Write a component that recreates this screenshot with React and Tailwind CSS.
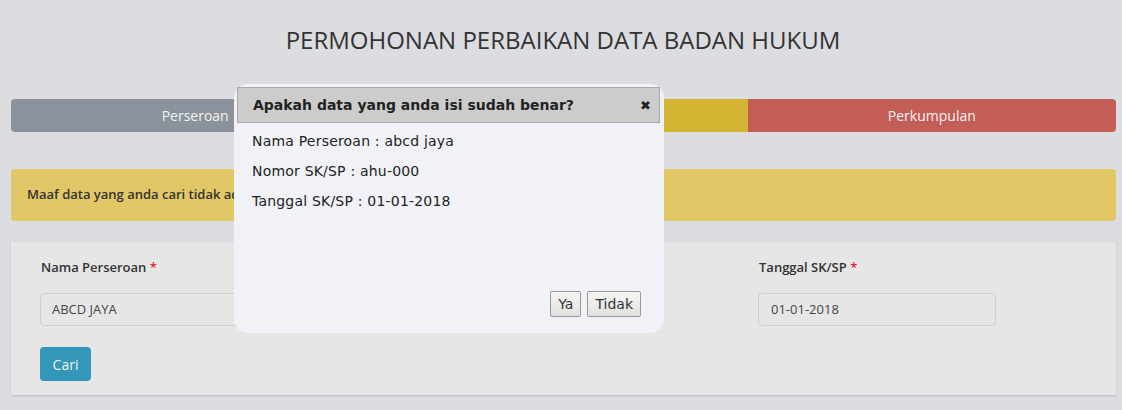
import React from "react";

export default function App() {
  return (
    <div className="relative w-[1122px] h-[410px] overflow-hidden bg-[#dcdde1] font-['Open_Sans',sans-serif] text-[#333]">
      <div className="pt-[24px] h-[99px]">
        <h1 className="text-center text-[24px] leading-[32px] font-normal text-[#333] pl-[4px]">
          PERMOHONAN PERBAIKAN DATA BADAN HUKUM
        </h1>
      </div>

      <div className="mx-[11px] w-[1105px] h-[33px] flex rounded-[4px] overflow-hidden text-[14px] text-[#f2f2f2]">
        <div className="flex-1 bg-[#8a929b] flex items-center justify-center">Perseroan</div>
        <div className="flex-1 bg-[#d4b533] flex items-center justify-center">Yayasan</div>
        <div className="flex-1 bg-[#c25e55] flex items-center justify-center">Perkumpulan</div>
      </div>

      <div className="mx-[11px] mt-[37px] w-[1105px] h-[52px] rounded-[4px] bg-[#e2c766] flex items-center px-[16px] text-[13px] font-semibold text-[#333]">
        Maaf data yang anda cari tidak ada
      </div>

      <div className="mx-[11px] mt-[21px] w-[1105px] h-[153px] bg-[#e6e6e6] shadow-[0_1px_2px_rgba(0,0,0,0.15)] pt-[16px] px-[29px]">
        <div className="grid grid-cols-[329px_329px_238px] gap-x-[30px]">
          <div>
            <div className="text-[13px] font-semibold leading-[18px] h-[35px] pl-[1px]">
              Nama Perseroan <span className="text-[#e0262b]">*</span>
            </div>
            <div className="h-[33px] border border-[#cfcfcf] rounded-[4px] flex items-center px-[11px] text-[13px] text-[#444]">
              ABCD JAYA
            </div>
          </div>
          <div>
            <div className="text-[13px] font-semibold leading-[18px] h-[35px]">
              Nomor SK/SP <span className="text-[#e0262b]">*</span>
            </div>
            <div className="w-[250px] h-[33px] border border-[#cfcfcf] rounded-[4px] flex items-center px-[11px] text-[13px] text-[#444]">
              ahu-000
            </div>
          </div>
          <div>
            <div className="text-[13px] font-semibold leading-[18px] h-[35px] pl-[1px]">
              Tanggal SK/SP <span className="text-[#e0262b]">*</span>
            </div>
            <div className="h-[33px] border border-[#cfcfcf] rounded-[4px] flex items-center px-[12px] text-[13px] text-[#444]">
              01-01-2018
            </div>
          </div>
        </div>
        <button className="mt-[21px] w-[51px] h-[34px] rounded-[4px] bg-[#3397b9] text-[#f2f2f2] text-[14px]">
          Cari
        </button>
      </div>

      <div className="absolute left-[234px] top-[84px] w-[430px] h-[249px] rounded-[14px] bg-[#f0f2f7] pt-[3px] pl-[3px] pr-[4px] pb-[16px] flex flex-col font-['DejaVu_Sans',Verdana,sans-serif]">
        <div className="h-[36px] bg-[#cccccc] border border-[#aaaaaa] flex items-center justify-between pl-[15px] pr-[8px]">
          <span className="text-[14px] font-bold text-[#222]">Apakah data yang anda isi sudah benar?</span>
          <span className="text-[13px] font-bold text-[#222] leading-none">✖</span>
        </div>
        <div className="pl-[15px] pt-[3px] text-[14px] text-[#222] leading-[30px] tracking-[0.2px]">
          <div>Nama Perseroan : abcd jaya</div>
          <div>Nomor SK/SP : ahu-000</div>
          <div>Tanggal SK/SP : 01-01-2018</div>
        </div>
        <div className="mt-auto flex justify-end gap-[6px] pr-[19px]">
          <button className="h-[26px] px-[7px] border border-[#999] rounded-[2px] bg-gradient-to-b from-[#f6f6f6] to-[#e1e1e1] text-[14px] text-[#333]">Ya</button>
          <button className="h-[26px] px-[7px] border border-[#999] rounded-[2px] bg-gradient-to-b from-[#f6f6f6] to-[#e1e1e1] text-[14px] text-[#333]">Tidak</button>
        </div>
      </div>
    </div>
  );
}
